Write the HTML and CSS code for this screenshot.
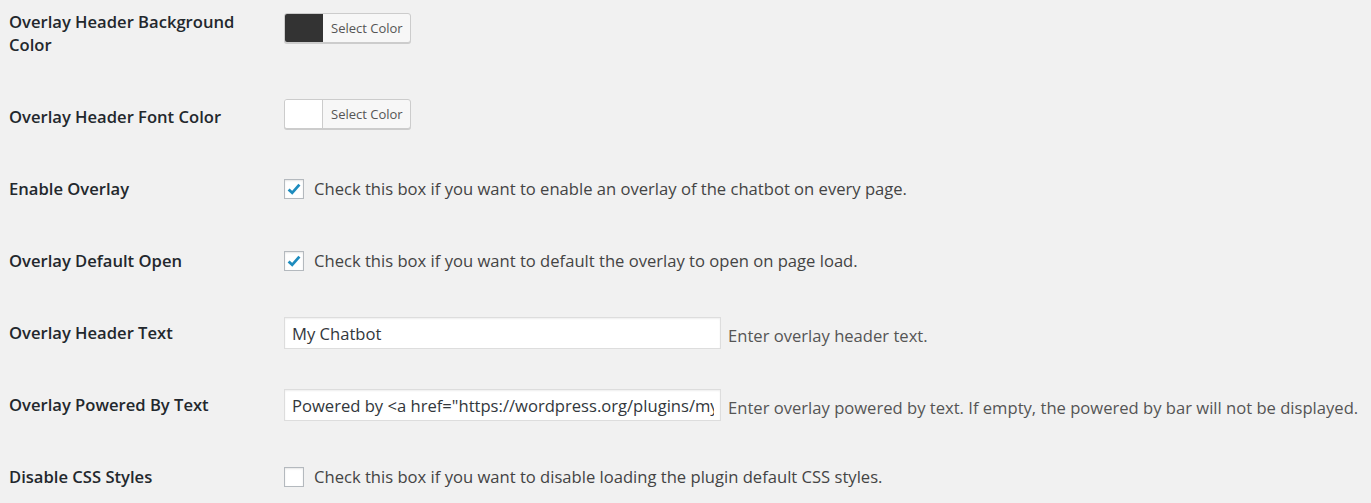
FILE: index.html
```html
<!DOCTYPE html>
<html lang="en">
<head>
<meta charset="utf-8">
<title>Overlay settings</title>
<link rel="stylesheet" href="styles.css">
</head>
<body>
<div class="form">
  <div class="row row-tall">
    <div class="label">Overlay Header Background Color</div>
    <div class="field">
      <span class="color-result"><span class="swatch swatch-dark"></span><span class="color-text">Select Color</span></span>
    </div>
  </div>
  <div class="row">
    <div class="label">Overlay Header Font Color</div>
    <div class="field field-picker">
      <span class="color-result"><span class="swatch swatch-light"></span><span class="color-text">Select Color</span></span>
    </div>
  </div>
  <div class="row">
    <div class="label">Enable Overlay</div>
    <div class="field">
      <span class="checkbox"><svg viewBox="0 0 20 20" width="20" height="20"><path d="M4.6 10.4 L8.2 13.8 L15.4 5.6" fill="none" stroke="#1e8cbe" stroke-width="2.8" stroke-linecap="butt" stroke-linejoin="miter"/></svg></span>
      <span class="desc">Check this box if you want to enable an overlay of the chatbot on every page.</span>
    </div>
  </div>
  <div class="row">
    <div class="label">Overlay Default Open</div>
    <div class="field">
      <span class="checkbox"><svg viewBox="0 0 20 20" width="20" height="20"><path d="M4.6 10.4 L8.2 13.8 L15.4 5.6" fill="none" stroke="#1e8cbe" stroke-width="2.8" stroke-linecap="butt" stroke-linejoin="miter"/></svg></span>
      <span class="desc">Check this box if you want to default the overlay to open on page load.</span>
    </div>
  </div>
  <div class="row">
    <div class="label">Overlay Header Text</div>
    <div class="field">
      <input class="text-input" type="text" value="My Chatbot">
      <span class="desc desc-low">Enter overlay header text.</span>
    </div>
  </div>
  <div class="row">
    <div class="label">Overlay Powered By Text</div>
    <div class="field">
      <input class="text-input" type="text" value='Powered by &lt;a href="https://wordpress.org/plugins/my-chatbot" target="_blank"&gt;My Chatbot&lt;/a&gt;'>
      <span class="desc desc-low">Enter overlay powered by text. If empty, the powered by bar will not be displayed.</span>
    </div>
  </div>
  <div class="row">
    <div class="label">Disable CSS Styles</div>
    <div class="field">
      <span class="checkbox"></span>
      <span class="desc">Check this box if you want to disable loading the plugin default CSS styles.</span>
    </div>
  </div>
</div>
</body>
</html>
```
FILE: styles.css
```css
html, body {
  margin: 0;
  padding: 0;
  background: #f1f1f1;
}
body {
  font-family: "Open Sans", "Noto Sans", sans-serif;
  color: #444;
  overflow: hidden;
  height: 503px;
}
.form {
  padding-left: 9px;
}
.row {
  display: grid;
  grid-template-columns: 275px 1fr;
  min-height: 72px;
}
.label {
  padding: 25px 0;
  font-size: 16.6px;
  font-weight: 600;
  line-height: 22px;
  color: #23282d;
  align-self: start;
  width: 240px;
}
.row-tall {
  min-height: 80px;
}
.row-tall .label {
  padding: 10px 0 25px;
  line-height: 23px;
}
.row-tall .field {
  align-self: start;
  padding-top: 13px;
}
.field {
  align-self: center;
  display: flex;
  align-items: center;
  white-space: nowrap;
}
.field-picker {
  padding-bottom: 6px;
}
.color-result {
  display: flex;
  height: 28px;
  border: 1px solid #ccc;
  border-radius: 3px;
  background: #f7f7f7;
  box-shadow: 0 1px 0 #ccc;
  overflow: hidden;
}
.swatch {
  width: 37px;
  border-right: 1px solid #ccc;
}
.swatch-dark {
  background: #333;
  border-right-color: #333;
}
.swatch-light {
  background: #fff;
}
.color-text {
  font-size: 13px;
  line-height: 28px;
  color: #555;
  padding: 0 7px 0 8px;
}
.checkbox {
  width: 18px;
  height: 18px;
  border: 1px solid #b4b9be;
  background: #fff;
  box-shadow: inset 0 1px 2px rgba(0, 0, 0, 0.1);
  margin-right: 10px;
  position: relative;
  flex: none;
}
.checkbox svg {
  position: absolute;
  left: -1px;
  top: -1px;
}
.desc {
  font-size: 16.6px;
  line-height: 22px;
  color: #444;
}
.text-input {
  box-sizing: border-box;
  width: 437px;
  height: 32px;
  margin: 0;
  border: 1px solid #ddd;
  border-radius: 0;
  background: #fff;
  box-shadow: inset 0 1px 2px rgba(0, 0, 0, 0.07);
  padding: 0 6px 0 7px;
  font-family: "Open Sans", "Noto Sans", sans-serif;
  font-size: 16.6px;
  color: #32373c;
  outline: none;
  flex: none;
}
.desc-low {
  margin-left: 7px;
  padding-top: 5px;
  color: #555;
}
```
